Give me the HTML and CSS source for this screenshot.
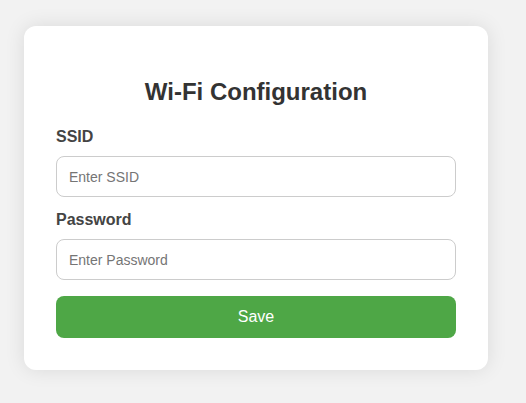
FILE: index.html
```html
<!DOCTYPE html>
<html>
<head>
<meta charset="utf-8">
<link rel="stylesheet" href="styles.css">
</head>
<body>
<div class="card">
  <h2 class="title">Wi-Fi Configuration</h2>
  <form class="form">
    <label class="label" for="ssid">SSID</label>
    <input class="input" id="ssid" type="text" placeholder="Enter SSID">
    <label class="label" for="pw">Password</label>
    <input class="input" id="pw" type="password" placeholder="Enter Password">
    <button class="btn" type="button">Save</button>
  </form>
</div>
</body>
</html>
```
FILE: styles.css
```css
html, body {
  margin: 0;
  background: #f2f2f2;
  font-family: "Liberation Sans", Arial, sans-serif;
}
body {
  padding: 26px 24px;
}
.card {
  width: 400px;
  background: #fff;
  border-radius: 12px;
  padding: 32px;
  box-shadow: 0 0 20px rgba(0,0,0,0.1);
}
.title {
  margin: 20px 0 22px;
  text-align: center;
  font-size: 24px;
  color: #333;
  line-height: 28px;
}
.form {
  display: flex;
  flex-direction: column;
}
.label {
  font-weight: bold;
  font-size: 16px;
  color: #444;
  line-height: 18px;
  margin-bottom: 10px;
}
.input {
  box-sizing: border-box;
  height: 41px;
  padding: 0 12px;
  border: 1px solid #ccc;
  border-radius: 8px;
  font-family: inherit;
  font-size: 14px;
  margin-bottom: 14px;
  color: #333;
}
.input::placeholder {
  color: #757575;
}
.btn {
  margin-top: 2px;
  height: 42px;
  border: none;
  border-radius: 8px;
  background: #4ea746;
  color: #fff;
  font-family: inherit;
  font-size: 16px;
}
```
